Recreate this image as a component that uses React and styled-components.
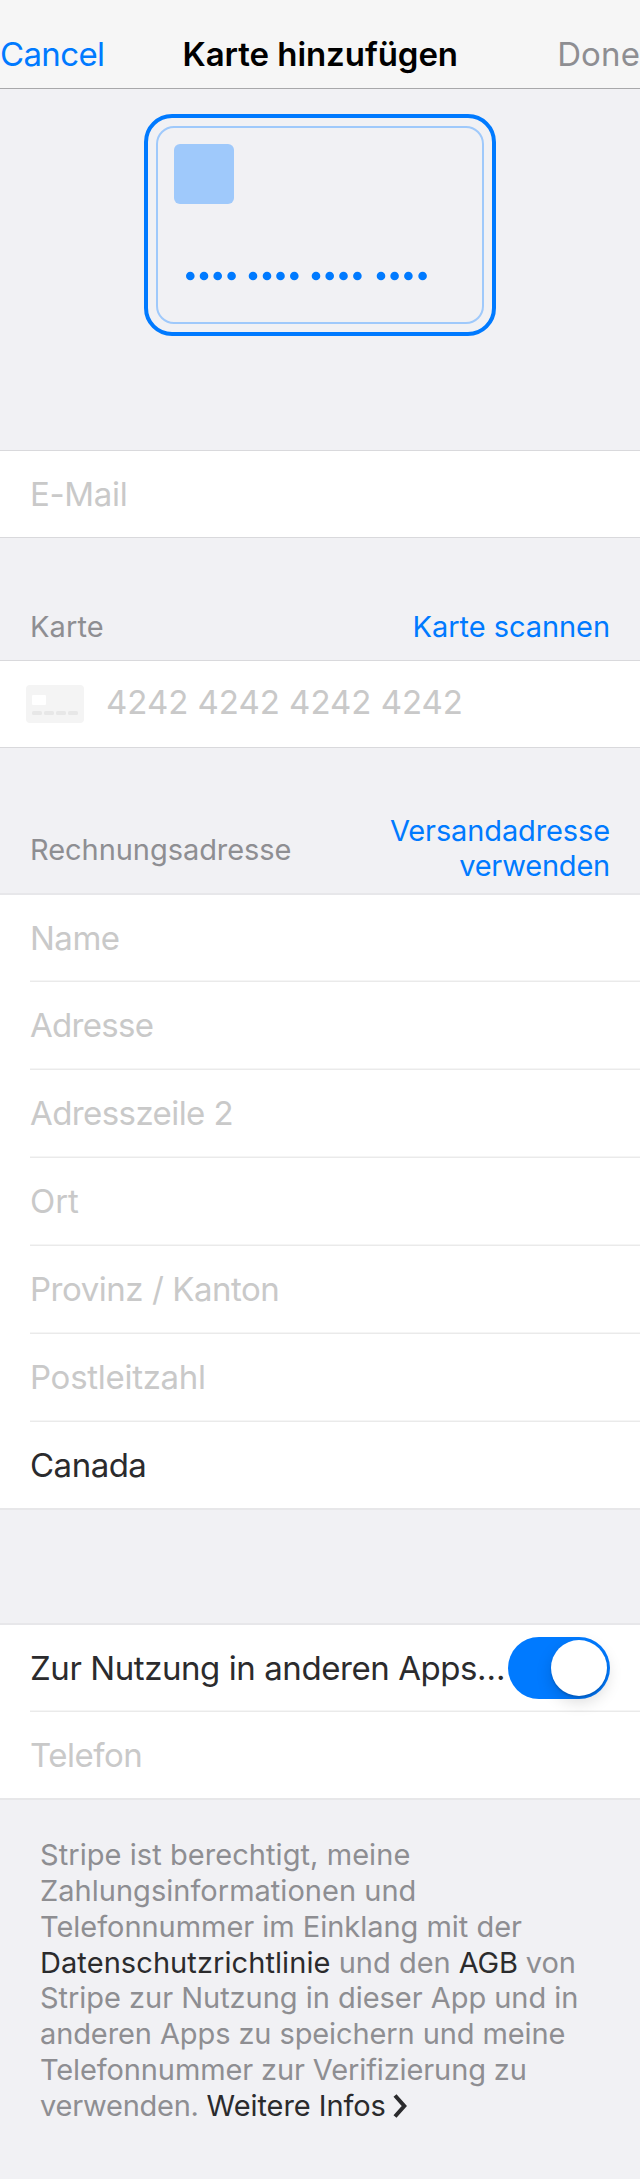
import React from "react";
import styled, { createGlobalStyle } from "styled-components";

const GlobalStyle = createGlobalStyle`
  * { box-sizing: border-box; }
  body {
    margin: 0;
    background: #f1f1f4;
    font-family: Inter, "Liberation Sans", sans-serif;
    -webkit-font-smoothing: antialiased;
  }
`;

const Page = styled.main`
  width: 640px;
  height: 2179px;
  overflow: hidden;
  background: #f1f1f4;
`;

const NavBar = styled.header`
  display: flex;
  justify-content: space-between;
  height: 89px;
  padding: 19px 0 0;
  background: #f6f6f6;
  border-bottom: 1px solid #a8a8aa;
`;

const NavText = styled.span`
  font-size: 33px;
  line-height: 70px;
  white-space: nowrap;
  color: ${(p) => p.$color};
  letter-spacing: ${(p) => p.$track || 0}px;
`;

const NavTitle = styled.h1`
  margin: 0 21px 0 0;
  font-size: 33px;
  font-weight: 600;
  line-height: 70px;
  letter-spacing: -0.05px;
  white-space: nowrap;
  color: #000;
`;

const CardPreview = styled.section`
  display: flex;
  justify-content: center;
  height: 361px;
  padding-top: 25px;
`;

const CardOutline = styled.div`
  width: 352px;
  height: 222px;
  padding: 8px;
  border: 4px solid #007aff;
  border-radius: 28px;
`;

const CardInner = styled.div`
  display: flex;
  flex-direction: column;
  justify-content: space-between;
  height: 198px;
  padding: 16px 16px 41px;
  border: 2px solid #9fc9fb;
  border-radius: 18px;
`;

const Chip = styled.div`
  width: 60px;
  height: 60px;
  border-radius: 6px;
  background: #9fc9fb;
`;

const Dots = styled.svg`
  display: block;
  width: 260px;
  height: 10px;
  margin-left: 12px;
  fill: #007aff;
`;

const Group = styled.section`
  background: #fff;
  border-top: ${(p) => (p.$soft ? "2px solid #e7e7ea" : "1px solid #d9d9dc")};
  border-bottom: ${(p) => (p.$soft ? "2px solid #e7e7e9" : "1px solid #d9d9dc")};
`;

const Row = styled.div`
  display: flex;
  align-items: center;
  height: ${(p) => p.$height}px;
  padding: 0 30px;
`;

const Divider = styled.div`
  height: 2px;
  margin-left: 30px;
  border-top: 1px solid #f5f5f5;
  background: #eaeaea;
`;

const FieldText = styled.span`
  font-size: 33px;
  line-height: 40px;
  white-space: nowrap;
  color: ${(p) => (p.$filled ? "#2b2b2d" : "#c9c9c9")};
  letter-spacing: ${(p) => p.$track || 0}px;
`;

const CardRow = styled(Row)`
  align-items: flex-start;
  padding: 24px 30px 0 26px;
`;

const CardNumber = styled(FieldText)`
  margin: -3px 0 0 22px;
`;

const SectionHeader = styled.div`
  display: flex;
  justify-content: space-between;
  align-items: flex-end;
  height: ${(p) => p.$height}px;
  padding: 0 30px ${(p) => p.$bottom}px;
`;

const HeaderText = styled.span`
  font-size: 29px;
  line-height: 35px;
  text-align: right;
  color: ${(p) => (p.$link ? "#007aff" : "#8e8e92")};
  letter-spacing: ${(p) => p.$track || 0}px;
  ${(p) => p.$raised && "margin-bottom: 16px;"}
`;

const HeaderLine = styled.span`
  display: block;
  letter-spacing: ${(p) => p.$track}px;
`;

const Spacer = styled.div`
  height: 113px;
`;

const Toggle = styled.button`
  flex: none;
  display: flex;
  justify-content: flex-end;
  align-items: center;
  width: 102px;
  height: 62px;
  margin-left: auto;
  padding: 0 3px 0 0;
  border: 0;
  border-radius: 31px;
  background: #007aff;
`;

const Thumb = styled.span`
  width: 56px;
  height: 56px;
  border-radius: 50%;
  background: #fff;
  box-shadow: 0 6px 16px rgba(0, 0, 0, 0.15), 0 2px 2px rgba(0, 0, 0, 0.16);
`;

const Legal = styled.p`
  margin: 0;
  padding: 37px 0 0 40px;
  font-size: 29px;
  color: #8e8e92;
  white-space: nowrap;
`;

const LegalLine = styled.span`
  display: block;
  height: ${(p) => p.$height || 36}px;
  line-height: ${(p) => p.$height || 36}px;
  letter-spacing: ${(p) => p.$track || 0}px;
`;

const LegalLink = styled.a`
  color: #2b2b2d;
  letter-spacing: ${(p) => p.$track || 0}px;
`;

const Chevron = styled.svg`
  width: 16px;
  height: 24px;
  margin-left: 7px;
  vertical-align: -2px;
`;

const dotX = [4.3, 18, 31.7, 45.6, 67, 81, 94.5, 108.3, 130, 143.7, 157.5, 171.4, 195, 208.6, 222.4, 236.6];

const addressFields = [
  { label: "Name", track: -0.5 },
  { label: "Adresse", track: -0.7 },
  { label: "Adresszeile 2", track: -0.58 },
  { label: "Ort", track: -0.1 },
  { label: "Provinz / Kanton", track: -0.46 },
  { label: "Postleitzahl", track: -0.28 },
  { label: "Canada", track: -0.5, filled: true },
];

function CardGlyph() {
  return (
    <svg width="58" height="38" viewBox="0 0 58 38">
      <rect width="58" height="38" rx="4" fill="#f4f4f4" />
      <rect x="6" y="10" width="14" height="10" rx="1" fill="#fff" />
      {[6, 18, 30, 42].map((x) => (
        <rect key={x} x={x} y="26" width="10" height="4" rx="1.5" fill="#e7e7e7" />
      ))}
    </svg>
  );
}

export default function App() {
  return (
    <Page>
      <GlobalStyle />
      <NavBar>
        <NavText $color="#007aff" $track={-0.64}>Cancel</NavText>
        <NavTitle>Karte hinzufügen</NavTitle>
        <NavText $color="#8e8e92" $track={0.13}>Done</NavText>
      </NavBar>

      <CardPreview>
        <CardOutline>
          <CardInner>
            <Chip />
            <Dots viewBox="0 0 260 10">
              {dotX.map((x) => (
                <circle key={x} cx={x} cy="5" r="4.3" />
              ))}
            </Dots>
          </CardInner>
        </CardOutline>
      </CardPreview>

      <Group>
        <Row $height={86}>
          <FieldText $track={-0.33}>E-Mail</FieldText>
        </Row>
      </Group>

      <SectionHeader $height={122} $bottom={16}>
        <HeaderText $track={0.1}>Karte</HeaderText>
        <HeaderText $link $track={-0.06}>Karte scannen</HeaderText>
      </SectionHeader>
      <Group>
        <CardRow $height={86}>
          <CardGlyph />
          <CardNumber $track={-0.02}>4242 4242 4242 4242</CardNumber>
        </CardRow>
      </Group>

      <SectionHeader $height={145} $bottom={10}>
        <HeaderText $raised $track={-0.05}>Rechnungsadresse</HeaderText>
        <HeaderText $link>
          <HeaderLine $track={-0.12}>Versandadresse</HeaderLine>
          <HeaderLine $track={-0.22}>verwenden</HeaderLine>
        </HeaderText>
      </SectionHeader>
      <Group $soft>
        {addressFields.map(({ label, track, filled }, i) => (
          <React.Fragment key={label}>
            {i > 0 && <Divider />}
            <Row $height={i ? 86 : 85}>
              <FieldText $track={track} $filled={filled}>{label}</FieldText>
            </Row>
          </React.Fragment>
        ))}
      </Group>

      <Spacer />

      <Group $soft>
        <Row $height={85}>
          <FieldText $filled $track={-0.43}>Zur Nutzung in anderen Apps…</FieldText>
          <Toggle role="switch" aria-checked="true"><Thumb /></Toggle>
        </Row>
        <Divider />
        <Row $height={86}>
          <FieldText $track={-0.5}>Telefon</FieldText>
        </Row>
      </Group>

      <Legal>
        <LegalLine $track={0.06}>Stripe ist berechtigt, meine</LegalLine>
        <LegalLine $track={0.02}>Zahlungsinformationen und</LegalLine>
        <LegalLine $track={-0.03}>Telefonnummer im Einklang mit der</LegalLine>
        <LegalLine $height={35}>
          <LegalLink $track={0.08}>Datenschutzrichtlinie</LegalLink> und den <LegalLink $track={-0.3}>AGB</LegalLink> von
        </LegalLine>
        <LegalLine $track={-0.03}>Stripe zur Nutzung in dieser App und in</LegalLine>
        <LegalLine $track={-0.1}>anderen Apps zu speichern und meine</LegalLine>
        <LegalLine $track={-0.12}>Telefonnummer zur Verifizierung zu</LegalLine>
        <LegalLine $track={-0.25}>
          verwenden.{" "}
          <LegalLink $track={-0.07}>
            Weitere Infos
            <Chevron viewBox="0 0 16 24" fill="none" stroke="#2b2b2d" strokeWidth="4">
              <path d="M2 1.5 L11.3 12 L2 22.5" />
            </Chevron>
          </LegalLink>
        </LegalLine>
      </Legal>
    </Page>
  );
}
